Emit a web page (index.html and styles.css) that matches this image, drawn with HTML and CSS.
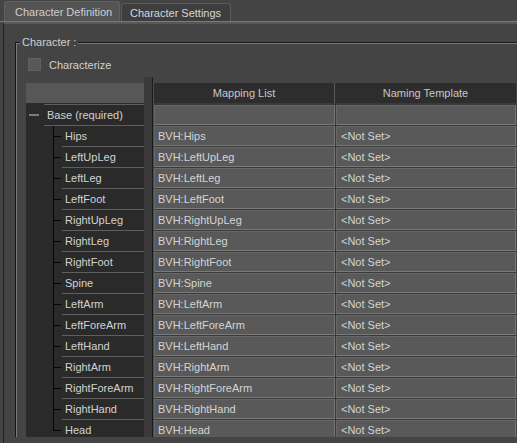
FILE: index.html
```html
<!DOCTYPE html>
<html>
<head>
<meta charset="utf-8">
<link rel="stylesheet" href="styles.css">
</head>
<body>
<div class="tabbar">
  <div class="tab active">Character Definition</div>
  <div class="tab">Character Settings</div>
</div>
<div class="page">
  <fieldset class="group">
    <legend>Character :</legend>
    <div class="check"><span class="box"></span><span>Characterize</span></div>
    <div class="main">
      <div class="tree">
        <div class="tree-head"></div>
        <div class="tree-body">
          <div class="node root"><span class="minus"><span></span></span><span class="lbl">Base (required)</span></div>
          <div class="node child"><span class="conn"></span><span class="lbl">Hips</span></div>
          <div class="node child"><span class="conn"></span><span class="lbl">LeftUpLeg</span></div>
          <div class="node child"><span class="conn"></span><span class="lbl">LeftLeg</span></div>
          <div class="node child"><span class="conn"></span><span class="lbl">LeftFoot</span></div>
          <div class="node child"><span class="conn"></span><span class="lbl">RightUpLeg</span></div>
          <div class="node child"><span class="conn"></span><span class="lbl">RightLeg</span></div>
          <div class="node child"><span class="conn"></span><span class="lbl">RightFoot</span></div>
          <div class="node child"><span class="conn"></span><span class="lbl">Spine</span></div>
          <div class="node child"><span class="conn"></span><span class="lbl">LeftArm</span></div>
          <div class="node child"><span class="conn"></span><span class="lbl">LeftForeArm</span></div>
          <div class="node child"><span class="conn"></span><span class="lbl">LeftHand</span></div>
          <div class="node child"><span class="conn"></span><span class="lbl">RightArm</span></div>
          <div class="node child"><span class="conn"></span><span class="lbl">RightForeArm</span></div>
          <div class="node child"><span class="conn"></span><span class="lbl">RightHand</span></div>
          <div class="node child last"><span class="conn"></span><span class="lbl">Head</span></div>
          <div class="node child more"><span class="conn"></span><span class="lbl"></span></div>
        </div>
      </div>
      <div class="splitter"></div>
      <div class="table">
        <div class="thead">
          <div class="th">Mapping List</div>
          <div class="th">Naming Template</div>
        </div>
        <div class="tbody">
          <div class="td"></div><div class="td"></div>
          <div class="td">BVH:Hips</div><div class="td">&lt;Not Set&gt;</div>
          <div class="td">BVH:LeftUpLeg</div><div class="td">&lt;Not Set&gt;</div>
          <div class="td">BVH:LeftLeg</div><div class="td">&lt;Not Set&gt;</div>
          <div class="td">BVH:LeftFoot</div><div class="td">&lt;Not Set&gt;</div>
          <div class="td">BVH:RightUpLeg</div><div class="td">&lt;Not Set&gt;</div>
          <div class="td">BVH:RightLeg</div><div class="td">&lt;Not Set&gt;</div>
          <div class="td">BVH:RightFoot</div><div class="td">&lt;Not Set&gt;</div>
          <div class="td">BVH:Spine</div><div class="td">&lt;Not Set&gt;</div>
          <div class="td">BVH:LeftArm</div><div class="td">&lt;Not Set&gt;</div>
          <div class="td">BVH:LeftForeArm</div><div class="td">&lt;Not Set&gt;</div>
          <div class="td">BVH:LeftHand</div><div class="td">&lt;Not Set&gt;</div>
          <div class="td">BVH:RightArm</div><div class="td">&lt;Not Set&gt;</div>
          <div class="td">BVH:RightForeArm</div><div class="td">&lt;Not Set&gt;</div>
          <div class="td">BVH:RightHand</div><div class="td">&lt;Not Set&gt;</div>
          <div class="td">BVH:Head</div><div class="td">&lt;Not Set&gt;</div>
          <div class="td"></div><div class="td"></div>
        </div>
      </div>
    </div>
  </fieldset>
</div>
</body>
</html>
```

FILE: styles.css
```css
html, body {
  margin: 0;
  padding: 0;
}
body {
  width: 517px;
  height: 443px;
  overflow: hidden;
  background: #444444;
  font-family: "Liberation Sans", Arial, sans-serif;
  font-size: 11px;
  color: #d0d0d0;
}

.tabbar {
  display: flex;
  align-items: flex-end;
  height: 21px;
  padding-left: 4px;
  gap: 1px;
  border-bottom: 1px solid #7a7a7a;
  background: #444444;
}
.tab {
  box-sizing: border-box;
  display: flex;
  align-items: center;
  border: 1px solid #5a5a5a;
  border-bottom: none;
  border-radius: 3px 3px 0 0;
  background: #3e3e3e;
  color: #d6d6d6;
  width: 110px;
  height: 18px;
  padding-left: 8px;
  padding-top: 1px;
}
.tab.active {
  width: 116px;
  height: 20px;
  padding-left: 10px;
  padding-top: 0;
  background: #545454;
  border-color: #606060;
  color: #cfcfcf;
}

.page {
  margin-left: 3px;
  border-left: 1px solid #1f1f1f;
  border-top: 2px solid #585858;
  height: 419px;
  overflow: hidden;
}

.group {
  margin: 12px 0 0 11px;
  padding: 0;
  border: 1px solid #161616;
  border-right: none;
  border-bottom: none;
  box-shadow: inset 1px 1px 0 #7a7a7a;
  min-width: 0;
  height: 400px;
  overflow: hidden;
}
.group legend {
  margin-left: 4px;
  padding: 0 2px;
  line-height: 13px;
  background: #444444;
  color: #cfcfcf;
}

.check {
  display: flex;
  align-items: center;
  gap: 8px;
  margin: 9px 0 0 12px;
  height: 13px;
  color: #d0d0d0;
}
.box {
  box-sizing: border-box;
  width: 13px;
  height: 13px;
  background: #585858;
  border: 1px solid #5f5f5f;
}

.main {
  display: flex;
  margin: 12px 0 0 10px;
}

.tree {
  width: 118px;
  flex: none;
  background: #2a2a2a;
}
.tree-head {
  height: 20px;
  background: #575757;
}
.tree-body {
  padding-top: 1px;
}
.node {
  display: flex;
  height: 21px;
}
.node .lbl {
  flex: 1;
  display: flex;
  align-items: center;
  border-bottom: 1px solid #5e5e5e;
  padding-left: 3px;
  color: #d2d2d2;
}
.node.root {
  height: 22px;
}
.node.root .lbl {
  border-top: 1px solid #5e5e5e;
}
.minus {
  width: 18px;
  display: flex;
  align-items: center;
}
.minus span {
  display: block;
  width: 10px;
  height: 2px;
  margin-left: 3px;
  background: #7c7c7c;
}
.node.child {
  margin-left: 27px;
}
.conn {
  width: 9px;
  flex: none;
  background:
    linear-gradient(#050505, #050505) left top / 1px 100% no-repeat,
    linear-gradient(#050505, #050505) left center / 8px 1px no-repeat;
}
.node.last .conn {
  background:
    linear-gradient(#050505, #050505) left top / 1px 11px no-repeat,
    linear-gradient(#050505, #050505) left center / 8px 1px no-repeat;
}
.node.more .conn {
  background: none;
}

.splitter {
  width: 8px;
  flex: none;
  background: #3a3a3a;
  border-right: 1px solid #1c1c1c;
  margin-top: -6px;
}

.table {
  flex: none;
  width: 362px;
  border-left: 1px solid #4c4c4c;
  background: #3a3a3a;
}
.thead {
  display: grid;
  grid-template-columns: 181px 181px;
  height: 20px;
  background: #2d2d2d;
}
.th {
  display: flex;
  align-items: center;
  justify-content: center;
  color: #c8c8c8;
}
.th:first-child {
  border-right: 1px solid #5a5a5a;
}
.tbody {
  display: grid;
  grid-template-columns: 181px 180px;
  grid-auto-rows: 20px;
  gap: 1px;
  margin-top: 2px;
}
.td {
  box-sizing: border-box;
  display: flex;
  align-items: center;
  padding-left: 3px;
  background: #595959;
  border: 1px solid #676767;
  border-bottom-color: #7a7a7a;
  border-right-color: #767676;
  color: #d4d4d4;
}
.td:nth-child(2n) {
  padding-left: 4px;
}
```
